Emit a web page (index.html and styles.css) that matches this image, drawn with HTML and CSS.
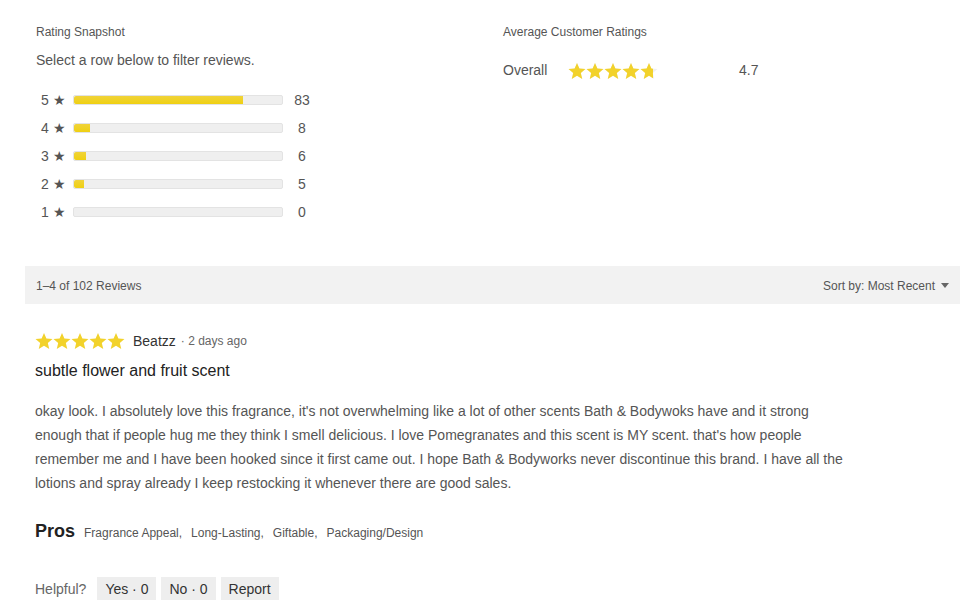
FILE: index.html
```html
<!DOCTYPE html>
<html>
<head>
<meta charset="utf-8">
<link rel="stylesheet" href="styles.css">
</head>
<body>
<svg width="0" height="0" class="defs">
  <defs>
    <symbol id="star" viewBox="0 0 24 24"><path d="M12 1.2l3.2 7.5 8.1.6-6.2 5.3 1.9 7.9L12 18.3l-7 4.2 1.9-7.9L.7 9.3l8.1-.6z"/></symbol>
  </defs>
</svg>
<div class="page">
  <section class="summary">
    <div class="snapshot">
      <h3 class="label">Rating Snapshot</h3>
      <p class="hint">Select a row below to filter reviews.</p>
      <ul class="hist">
        <li class="row"><span class="lvl">5 ★</span><span class="bar"><span class="fill" style="width:81.4%"></span></span><span class="cnt">83</span></li>
        <li class="row"><span class="lvl">4 ★</span><span class="bar"><span class="fill" style="width:7.8%"></span></span><span class="cnt">8</span></li>
        <li class="row"><span class="lvl">3 ★</span><span class="bar"><span class="fill" style="width:5.9%"></span></span><span class="cnt">6</span></li>
        <li class="row"><span class="lvl">2 ★</span><span class="bar"><span class="fill" style="width:4.9%"></span></span><span class="cnt">5</span></li>
        <li class="row"><span class="lvl">1 ★</span><span class="bar"><span class="fill" style="width:0%"></span></span><span class="cnt">0</span></li>
      </ul>
    </div>
    <div class="average">
      <h3 class="label">Average Customer Ratings</h3>
      <div class="overall">
        <span class="ov-label">Overall</span>
        <span class="stars big">
          <span class="stars-bg">
            <svg><use href="#star"/></svg><svg><use href="#star"/></svg><svg><use href="#star"/></svg><svg><use href="#star"/></svg><svg><use href="#star"/></svg>
          </span>
          <span class="stars-fg" style="width:94%">
            <svg><use href="#star"/></svg><svg><use href="#star"/></svg><svg><use href="#star"/></svg><svg><use href="#star"/></svg><svg><use href="#star"/></svg>
          </span>
        </span>
        <span class="ov-num">4.7</span>
      </div>
    </div>
  </section>

  <div class="toolbar">
    <span class="count">1–4 of 102 Reviews</span>
    <span class="sort">Sort by: Most Recent <span class="caret"></span></span>
  </div>

  <article class="review">
    <div class="meta">
      <span class="stars small">
        <svg><use href="#star"/></svg><svg><use href="#star"/></svg><svg><use href="#star"/></svg><svg><use href="#star"/></svg><svg><use href="#star"/></svg>
      </span>
      <span class="author">Beatzz</span>
      <span class="date">· 2 days ago</span>
    </div>
    <h4 class="title">subtle flower and fruit scent</h4>
    <p class="body">okay look. I absolutely love this fragrance, it's not overwhelming like a lot of other scents Bath &amp; Bodywoks have and it strong enough that if people hug me they think I smell delicious. I love Pomegranates and this scent is MY scent. that's how people remember me and I have been hooked since it first came out. I hope Bath &amp; Bodyworks never discontinue this brand. I have all the lotions and spray already I keep restocking it whenever there are good sales.</p>
    <div class="pros">
      <span class="pros-h">Pros</span>
      <span class="tag">Fragrance Appeal,</span>
      <span class="tag">Long-Lasting,</span>
      <span class="tag">Giftable,</span>
      <span class="tag">Packaging/Design</span>
    </div>
    <div class="helpful">
      <span class="h-label">Helpful?</span>
      <button class="btn">Yes · 0</button>
      <button class="btn">No · 0</button>
      <button class="btn">Report</button>
    </div>
  </article>
</div>
</body>
</html>
```

FILE: styles.css
```css
* { box-sizing: border-box; }
html, body { margin: 0; padding: 0; background: #fff; }
body {
  font-family: "Liberation Sans", Arial, sans-serif;
  color: #555;
}
.defs { position: absolute; width: 0; height: 0; }
.page { padding: 0 7px 0 25px; }

.summary {
  display: flex;
  padding: 24px 0 0 11px;
  height: 266px;
}
.snapshot { width: 467px; }
.average { flex: 1; }
.label {
  margin: 0;
  font-size: 12px;
  font-weight: normal;
  color: #555;
  line-height: 16px;
}
.hint {
  margin: 11px 0 0;
  font-size: 14px;
  line-height: 18px;
  color: #555;
}
.hist { list-style: none; margin: 17px 0 0; padding: 0; }
.row {
  display: flex;
  align-items: center;
  height: 28px;
  font-size: 14px;
  color: #555;
}
.lvl { width: 37px; padding-left: 5px; white-space: nowrap; font-size: 14px; }
.bar {
  width: 210px;
  height: 10px;
  background: #efefef;
  border: 1px solid #e3e3e3;
  border-radius: 2px;
  overflow: hidden;
  display: block;
}
.fill {
  display: block;
  height: 100%;
  background: linear-gradient(#f0d33a, #efd012);
  border-radius: 2px 0 0 2px;
}
.cnt { width: 38px; text-align: center; }

.overall {
  display: flex;
  align-items: center;
  margin-top: 21px;
}
.ov-label { font-size: 14px; width: 65px; color: #555; }
.stars { display: inline-flex; }
.stars svg { fill: #f2d22b; flex: none; }
.stars.big { position: relative; width: 90px; height: 18px; top: 1px; }
.stars-bg, .stars-fg { position: absolute; left: 0; top: 0; display: flex; overflow: hidden; white-space: nowrap; }
.stars-bg svg { fill: #f0f0f0; }
.stars-fg svg { fill: #f2d22b; }
.stars.big svg { width: 18px; height: 18px; }
.ov-num { margin-left: 81px; font-size: 14px; color: #555; }

.toolbar {
  display: flex;
  justify-content: space-between;
  align-items: center;
  background: #f2f2f2;
  height: 38px;
  padding: 1px 11px 0;
  font-size: 12px;
  color: #555;
}
.sort { display: flex; align-items: center; }
.caret {
  display: inline-block;
  margin-left: 6px;
  width: 0; height: 0;
  border-left: 4.5px solid transparent;
  border-right: 4.5px solid transparent;
  border-top: 5px solid #666;
}

.review { padding: 28px 0 0 10px; }
.meta { display: flex; align-items: center; height: 18px; }
.stars.small svg { width: 18px; height: 18px; }
.author { margin-left: 8px; font-size: 14px; color: #333; }
.date { margin-left: 5px; font-size: 12px; color: #666; }
.title {
  margin: 11px 0 0;
  font-size: 16px;
  font-weight: normal;
  color: #222;
  line-height: 20px;
}
.body {
  margin: 18px 0 0;
  width: 820px;
  font-size: 14px;
  line-height: 24px;
  color: #555;
}
.pros {
  display: flex;
  align-items: baseline;
  margin-top: 26px;
}
.pros-h { font-size: 18px; font-weight: bold; color: #222; margin-right: 9px; }
.tag { font-size: 12px; color: #555; margin-right: 9px; }
.helpful {
  display: flex;
  align-items: center;
  margin-top: 35px;
  gap: 5px;
}
.h-label { font-size: 14px; color: #666; margin-right: 6px; }
.btn {
  font-family: inherit;
  font-size: 14px;
  color: #333;
  background: #eee;
  border: none;
  height: 23px;
  padding: 0 8px;
  margin: 0;
  border-radius: 0;
}
```
